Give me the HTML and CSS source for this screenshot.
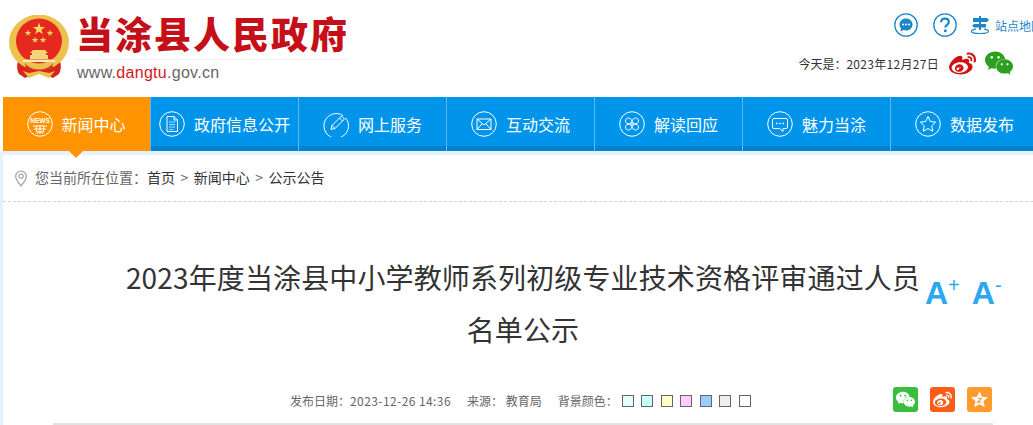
FILE: index.html
```html
<!DOCTYPE html>
<html lang="zh-CN">
<head>
    <meta charset="UTF-8">
    <meta name="viewport" content="width=device-width, initial-scale=1.0">
    <title>当涂县人民政府</title>
    <link rel="stylesheet" href="styles.css">
</head>
<body>
    <svg class="defs" aria-hidden="true">
        <symbol id="weibo" viewBox="0 0 24 24">
            <path d="M10.098 20.323c-3.977.391-7.414-1.406-7.672-4.02-.259-2.609 2.759-5.047 6.74-5.441 3.979-.394 7.413 1.404 7.671 4.018.259 2.6-2.759 5.049-6.737 5.439l-.002.004zM9.05 17.219c-.384.616-1.208.884-1.829.602-.612-.279-.793-.991-.406-1.593.379-.595 1.176-.861 1.793-.601.622.263.82.972.442 1.592zm1.27-1.627c-.141.237-.449.353-.689.253-.236-.09-.313-.361-.177-.586.138-.227.436-.346.672-.24.239.09.315.36.18.601l.014-.028zm.176-2.719c-1.893-.493-4.033.45-4.857 2.118-.836 1.704-.026 3.591 1.886 4.21 1.983.64 4.318-.341 5.132-2.179.8-1.793-.201-3.642-2.161-4.149zm7.563-1.224c-.346-.105-.57-.18-.405-.615.375-.977.42-1.804 0-2.404-.781-1.112-2.915-1.053-5.364-.03 0 0-.766.331-.571-.271.376-1.217.315-2.224-.27-2.809-1.338-1.337-4.869.045-7.888 3.08C1.309 10.87 0 13.273 0 15.348c0 3.981 5.099 6.395 10.086 6.395 6.536 0 10.888-3.801 10.888-6.82 0-1.822-1.547-2.854-2.915-3.284v.01zm1.908-5.092c-.766-.856-1.908-1.187-2.96-.962-.436.09-.706.511-.616.932.09.42.511.691.932.602.511-.105 1.067.044 1.442.465.376.421.466.977.316 1.473-.136.406.089.856.51.992.405.119.857-.105.992-.512.33-1.021.12-2.178-.646-3.035l.03.045zm2.418-2.195c-1.576-1.757-3.905-2.419-6.054-1.968-.496.104-.812.587-.706 1.081.104.496.586.813 1.082.707 1.532-.331 3.185.15 4.296 1.383 1.112 1.246 1.429 2.943.947 4.416-.165.48.106 1.007.586 1.157.479.165.991-.104 1.157-.586.675-2.088.241-4.478-1.338-6.235l.03.045z"/>
        </symbol>
        <symbol id="wechat" viewBox="0 0 24 24">
            <path d="M8.691 2.188C3.891 2.188 0 5.476 0 9.53c0 2.212 1.17 4.203 3.002 5.55a.59.59 0 0 1 .213.665l-.39 1.48c-.019.07-.048.141-.048.213 0 .163.13.295.29.295a.326.326 0 0 0 .167-.054l1.903-1.114a.864.864 0 0 1 .717-.098 10.16 10.16 0 0 0 2.837.403c.276 0 .543-.027.811-.05-.857-2.578.157-4.972 1.932-6.446 1.703-1.415 3.882-1.98 5.853-1.838-.576-3.583-4.196-6.348-8.596-6.348zM5.785 5.991c.642 0 1.162.529 1.162 1.18a1.17 1.17 0 0 1-1.162 1.178A1.17 1.17 0 0 1 4.623 7.17c0-.651.52-1.18 1.162-1.18zm5.813 0c.642 0 1.162.529 1.162 1.18a1.17 1.17 0 0 1-1.162 1.178 1.17 1.17 0 0 1-1.162-1.178c0-.651.52-1.18 1.162-1.18zm5.34 2.867c-1.797-.052-3.746.512-5.28 1.786-1.72 1.428-2.687 3.72-1.78 6.22.942 2.453 3.666 4.229 6.884 4.229.826 0 1.622-.12 2.361-.336a.722.722 0 0 1 .598.082l1.584.926a.272.272 0 0 0 .14.047c.134 0 .24-.111.24-.247 0-.06-.023-.12-.038-.177l-.327-1.233a.582.582 0 0 1-.023-.156.49.49 0 0 1 .201-.398C23.024 18.48 24 16.82 24 14.98c0-3.21-2.931-5.837-6.656-6.088V8.89c-.135-.01-.27-.027-.407-.03zm-2.53 3.274c.535 0 .969.44.969.982a.976.976 0 0 1-.969.983.976.976 0 0 1-.969-.983c0-.542.434-.982.97-.982zm4.844 0c.535 0 .969.44.969.982a.976.976 0 0 1-.969.983.976.976 0 0 1-.969-.983c0-.542.434-.982.969-.982z"/>
        </symbol>
        <symbol id="star" viewBox="-1 -1 2 2">
            <polygon points="0,-1 .225,-.309 .951,-.309 .363,.118 .588,.809 0,.382 -.588,.809 -.363,.118 -.951,-.309 -.225,-.309"/>
        </symbol>
    </svg>

    <div class="page">
        <!-- Header -->
        <header class="header">
            <div class="logo">
                <svg class="emblem" viewBox="0 0 60 64">
                    <path d="M10 44c-3 6-2 11 0 15l6 4 8-4h12l8 4 6-4c2-4 3-9 0-15z" fill="#d9261c"/>
                    <path d="M14 56l6 7 10-4 10 4 6-7-6 2-10-2-10 2z" fill="#edc14d"/>
                    <ellipse cx="30" cy="27.500" rx="30" ry="28" fill="#edc14d"/>
                    <ellipse cx="30" cy="26" rx="23" ry="22.500" fill="#e5291f"/>
                    <g fill="#f9dc5e">
                        <use href="#star" x="23.500" y="7.500" width="13" height="13"/>
                        <use href="#star" x="15.500" y="14.500" width="7" height="7"/>
                        <use href="#star" x="37.500" y="14.500" width="7" height="7"/>
                        <use href="#star" x="22.500" y="21.500" width="7" height="7"/>
                        <use href="#star" x="30.500" y="21.500" width="7" height="7"/>
                    </g>
                    <path d="M24 35h12l3 3h-2v2h2v4H21v-4h2v-2h-2z" fill="#f3d777"/>
                    <path d="M15 44.500h30l2 2.500H13z" fill="#fbeebc"/>
                    <path d="M16 48c2 4 8 6.500 14 6.500S42 52 44 48l-1 5-13 3-13-3z" fill="#d9261c"/>
                </svg>
                <div class="logo-text">
                    <div class="site-name">当涂县人民政府</div>
                    <div class="site-url">www.<span>dangtu</span>.gov.cn</div>
                </div>
            </div>
            <div class="header-right">
                <div class="tools">
                    <svg class="tool-icon" viewBox="0 0 24 24">
                        <circle cx="12" cy="12" r="11.200" fill="none" stroke="#1b87c9" stroke-width="1.300"/>
                        <path d="M12 5.500c-3.800 0-6.500 2.700-6.500 6 0 1.500.6 2.900 1.500 3.900l-.5 3 3-1.300c.8.300 1.600.4 2.500.4 3.800 0 6.500-2.700 6.500-6s-2.700-6-6.500-6z" fill="#1b87c9"/>
                        <circle cx="9" cy="11.500" r="1" fill="#fff"/>
                        <circle cx="12" cy="11.500" r="1" fill="#fff"/>
                        <circle cx="15" cy="11.500" r="1" fill="#fff"/>
                    </svg>
                    <svg class="tool-icon" viewBox="0 0 24 24">
                        <circle cx="12" cy="12" r="11.200" fill="none" stroke="#1b87c9" stroke-width="1.300"/>
                        <path d="M8.200 9.200c0-2.200 1.700-3.500 3.800-3.500s3.800 1.300 3.800 3.300c0 2.800-3.500 2.800-3.500 5.500" fill="none" stroke="#1b87c9" stroke-width="2.200"/>
                        <circle cx="12.300" cy="17.800" r="1.500" fill="#1b87c9"/>
                    </svg>
                    <svg class="map-icon" viewBox="0 0 18 18">
                        <path d="M8 0h2v2h6l2 2-2 2h-6v2h5v3.500h-5V14H8v-2.500H3l-2-1.700L3 8h5V6H2V2h6z" fill="#1b87c9"/>
                        <path d="M5 13.200c-2.800.4-4.500 1.200-4.500 2.100C.5 16.700 4 17.600 9 17.600s8.500-.9 8.500-2.300c0-.9-1.700-1.700-4.500-2.100" fill="none" stroke="#1b87c9" stroke-width="1.200"/>
                    </svg>
                    <span class="map-link">站点地图</span>
                </div>
                <div class="today">
                    <span class="date">今天是&#xFF1A;<span class="num">2023年12月27日</span></span>
                    <svg class="weibo-red"><use href="#weibo"/></svg>
                    <svg class="wechat-green"><use href="#wechat"/></svg>
                </div>
            </div>
        </header>

        <!-- Nav -->
        <nav class="nav">
            <a class="nav-item active">
                <svg class="nav-icon" viewBox="0 0 26 26">
                    <circle cx="13" cy="13" r="12.300"/>
                    <text x="13" y="12" class="news-text">NEWS</text>
                    <path d="M6 15h14M7 18h12M10 21h6M13 14v9M10 14.500c-1 2-1 5 .5 8M16 14.500c1 2 1 5-.5 8"/>
                </svg>
                <span>新闻中心</span>
            </a>
            <a class="nav-item">
                <svg class="nav-icon" viewBox="0 0 26 26">
                    <circle cx="13" cy="13" r="12.300"/>
                    <path d="M8 5.500h7l3.500 3.500v11.500H8zM15 5.500V9h3.500"/>
                    <path class="soft" d="M10 11h6M10 13.500h6M10 16h6M10 18.500h4"/>
                </svg>
                <span>政府信息公开</span>
            </a>
            <a class="nav-item">
                <svg class="nav-icon" viewBox="0 0 26 26">
                    <path d="M20 4.600A12.300 12.300 0 1 0 22.500 6.800"/>
                    <path d="M8 18.500l1-4L18.500 5l3 3L12 17.500zM9 14.500l3 3M16.500 7l3 3"/>
                </svg>
                <span>网上服务</span>
            </a>
            <a class="nav-item">
                <svg class="nav-icon" viewBox="0 0 26 26">
                    <circle cx="13" cy="13" r="12.300"/>
                    <path d="M6 8h14v10.500H6zM6 8l7 6 7-6M6 18.500l5.300-6M20 18.500l-5.300-6"/>
                </svg>
                <span>互动交流</span>
            </a>
            <a class="nav-item">
                <svg class="nav-icon" viewBox="0 0 26 26">
                    <circle cx="13" cy="13" r="12.300"/>
                    <path d="M13 11c-.5-2.500-1.500-4-3.500-4S6.500 8.500 6.500 10.200 8 13 11 13c-3 0-4.500 1-4.500 2.800S7.500 19 9.500 19s3-1.500 3.500-4c.5 2.500 1.500 4 3.500 4s3-1.500 3-3.200S18 13 15 13c3 0 4.500-1 4.500-2.800S18.500 7 16.500 7 13.500 8.500 13 11z"/>
                    <rect class="fill-soft" x="11" y="11" width="4" height="4"/>
                </svg>
                <span>解读回应</span>
            </a>
            <a class="nav-item">
                <svg class="nav-icon" viewBox="0 0 26 26">
                    <circle cx="13" cy="13" r="12.300"/>
                    <path d="M7 7.500h12a1.500 1.500 0 0 1 1.500 1.500v7a1.500 1.500 0 0 1-1.500 1.500h-3v3l-3.500-3H7A1.500 1.500 0 0 1 5.500 16V9A1.500 1.500 0 0 1 7 7.500z"/>
                    <path class="thick" d="M9 12.500h1.500M12.300 12.500h1.500M15.500 12.500H17"/>
                </svg>
                <span>魅力当涂</span>
            </a>
            <a class="nav-item">
                <svg class="nav-icon" viewBox="0 0 26 26">
                    <circle cx="13" cy="13" r="12.300"/>
                    <path d="M13 5.500l2.300 5 5.400.6-4 3.700 1.100 5.400-4.800-2.700-4.800 2.700 1.100-5.400-4-3.700 5.400-.6z"/>
                </svg>
                <span>数据发布</span>
            </a>
        </nav>

        <main class="main">
            <div class="content">
                <div class="crumb">
                    <svg class="pin" viewBox="0 0 12 16">
                        <path d="M6 1C3 1 1 3.200 1 5.800 1 9 4 12.500 6 15c2-2.500 5-6 5-9.200C11 3.200 9 1 6 1z"/>
                        <circle cx="6" cy="5.800" r="2"/>
                    </svg>
                    <span class="crumb-label">您当前所在位置&#xFF1A;</span>
                    <span>首页</span>
                    <span class="crumb-sep">&gt;</span>
                    <span>新闻中心</span>
                    <span class="crumb-sep">&gt;</span>
                    <span>公示公告</span>
                </div>

                <div class="article">
                    <div class="title-row">
                        <h1 class="title">2023年度当涂县中小学教师系列初级专业技术资格评审通过人员名单公示</h1>
                        <div class="font-size">
                            <span class="font-btn">A<sup>+</sup></span>
                            <span class="font-btn">A<sup>-</sup></span>
                        </div>
                    </div>
                    <div class="meta">
                        <span>发布日期&#xFF1A;<span class="num meta-num">2023-12-26 14:36</span></span>
                        <span>来源&#xFF1A; 教育局</span>
                        <span class="colors">背景颜色&#xFF1A;
                            <i class="swatch c1"></i>
                            <i class="swatch c2"></i>
                            <i class="swatch c3"></i>
                            <i class="swatch c4"></i>
                            <i class="swatch c5"></i>
                            <i class="swatch c6"></i>
                            <i class="swatch c7"></i>
                        </span>
                        <div class="share">
                            <div class="share-btn green"><svg><use href="#wechat"/></svg></div>
                            <div class="share-btn orange"><svg><use href="#weibo"/></svg></div>
                            <div class="share-btn yellow">
                                <svg viewBox="0 0 24 24">
                                    <path d="M12 1.500l3.200 7 7.300.8-5.400 5 1.500 7.500-6.600-3.700-6.600 3.700 1.500-7.500-5.400-5 7.300-.8z"/>
                                    <path class="qz" d="M9.500 10.500h5l-5 5h5"/>
                                </svg>
                            </div>
                        </div>
                    </div>
                </div>
            </div>
        </main>
    </div>
</body>
</html>
```

FILE: styles.css
```css
html, body {
    margin: 0;
    height: 100%;
    overflow: hidden;
    background: #fff;
}

body {
    font-family: "Noto Sans CJK SC", "Liberation Sans", sans-serif;
    color: #333;
}

.defs {
    display: none;
}

.page {
    width: 1043px;
}

.num {
    letter-spacing: .3px;
}

.meta-num {
    letter-spacing: .42px;
}

/* header */
.header {
    display: flex;
    justify-content: space-between;
    height: 97px;
}

.logo {
    display: flex;
    padding: 15px 0 0 9px;
}

.emblem {
    width: 60px;
    height: 64px;
    margin-right: 7px;
}

.site-name {
    width: 272px;
    height: 44px;
    border-bottom: 1px solid #eee;
    font-size: 37px;
    line-height: 36px;
    font-weight: 900;
    letter-spacing: 2px;
    white-space: nowrap;
    color: #c50f19;
}

.site-url {
    margin-top: 3px;
    margin-left: 1px;
    font-family: "Liberation Sans", sans-serif;
    font-size: 16px;
    line-height: 20px;
    letter-spacing: .28px;
    color: #666;
}

.site-url span {
    color: #d9161c;
}

.header-right {
    display: flex;
    flex-direction: column;
    align-items: flex-end;
    padding-top: 13px;
}

.tools {
    display: flex;
    align-items: center;
    height: 24px;
}

.tool-icon {
    width: 24px;
    height: 24px;
    margin-right: 15px;
}

.map-icon {
    width: 18px;
    height: 18px;
    margin-left: -1px;
    margin-right: 6px;
}

.map-link {
    font-size: 12px;
    color: #1b87c9;
    white-space: nowrap;
}

.today {
    display: flex;
    align-items: center;
    margin-top: 14px;
    margin-right: 30px;
    height: 24px;
}

.date {
    font-size: 12px;
    color: #333;
    margin-right: 10px;
}

.weibo-red {
    width: 27px;
    height: 27px;
    fill: #d20f10;
    margin-right: 9px;
}

.wechat-green {
    width: 28px;
    height: 28px;
    fill: #2c9f1f;
}

/* nav */
.nav {
    display: flex;
    height: 54px;
    margin-left: 3px;
    background: #0095eb;
    box-shadow: inset 0 -5px 0 #0582c8;
}

.nav-item {
    display: flex;
    align-items: center;
    justify-content: center;
    flex: 0 0 148px;
    box-sizing: border-box;
    gap: 9px;
    padding-bottom: 1px;
    border-right: 1px solid #62b7ea;
    font-size: 16px;
    color: #fff;
    white-space: nowrap;
}

.nav-item.active {
    position: relative;
    gap: 8px;
    background: #ff9400;
}

.nav-item.active::after {
    content: "";
    position: absolute;
    left: 66px;
    top: 54px;
    border-left: 7px solid transparent;
    border-right: 7px solid transparent;
    border-top: 7px solid #ff9400;
}

.nav-icon {
    width: 26px;
    height: 26px;
    fill: none;
    stroke: #fff;
    stroke-width: 1;
    flex: none;
}

.nav-icon .soft {
    stroke: #a8dcf8;
}

.nav-icon .thick {
    stroke-width: 1.6;
}

.nav-icon .fill-soft {
    fill: #a8dcf8;
    stroke: none;
}

.news-text {
    font-family: "Liberation Sans", sans-serif;
    font-size: 6.5px;
    font-weight: bold;
    text-anchor: middle;
    fill: #fff;
    stroke: none;
}

/* main */
.main {
    padding: 4px 0 0 3px;
    background: #e3f2fe;
    height: 274px;
}

.content {
    background: #fff;
    height: 100%;
}

.crumb {
    display: flex;
    align-items: center;
    height: 47px;
    box-sizing: border-box;
    padding-left: 11px;
    padding-bottom: 2px;
    border-bottom: 1px dashed #d5cdd0;
    font-size: 14px;
    color: #333;
}

.pin {
    width: 14px;
    height: 17px;
    margin-right: 7px;
    margin-top: 2px;
    fill: none;
    stroke: #a5a5a5;
    stroke-width: 1.2;
}

.crumb-label {
    color: #666;
}

.crumb-sep {
    margin: 0 5.500px;
    color: #666;
}

/* article */
.article {
    margin: 0 50px;
    height: 223px;
    box-sizing: border-box;
    border-bottom: 2px solid #e2e2e2;
    display: flex;
    flex-direction: column;
}

.title-row {
    display: flex;
    padding: 49px 0 0 67px;
}

.title {
    flex: none;
    width: 806px;
    margin: 0;
    font-size: 28px;
    line-height: 52px;
    font-weight: 400;
    letter-spacing: .13px;
    text-align: center;
    color: #333;
}

.font-size {
    display: flex;
    flex: none;
    gap: 12px;
    margin-left: -1px;
    padding-top: 23px;
}

.font-btn {
    font-family: "Liberation Sans", sans-serif;
    font-size: 32px;
    line-height: 38px;
    font-weight: bold;
    color: #2ea7ee;
}

.font-btn sup {
    font-size: 20px;
    font-weight: normal;
    line-height: 0;
    vertical-align: 12px;
}

.meta {
    display: flex;
    align-items: center;
    gap: 16px;
    margin-top: auto;
    padding: 0 1px 11px 237px;
    font-size: 12px;
    color: #666;
    white-space: nowrap;
}

.meta > span {
    margin-top: 2px;
}

.colors {
    display: flex;
    align-items: center;
    gap: 7.5px;
}

.swatch {
    display: block;
    width: 12px;
    height: 12px;
    box-sizing: border-box;
    border: 1px solid #666;
}

.c1 {
    margin-left: -3.5px;
    background: #e3fdfd;
}
.c2 { background: #c8ffff; }
.c3 { background: #ffffcc; }
.c4 { background: #ffccff; }
.c5 { background: #99ccff; }
.c6 { background: #eeeeee; }
.c7 { background: #ffffff; }

.share {
    display: flex;
    gap: 12px;
    margin-left: auto;
}

.share-btn {
    display: flex;
    align-items: center;
    justify-content: center;
    width: 25px;
    height: 25px;
    border-radius: 3px;
}

.share-btn svg {
    width: 19px;
    height: 19px;
    fill: #fff;
}

.green { background: #38bd3e; }
.orange { background: #fb5d18; }
.yellow { background: #ff9a2e; }

.qz {
    fill: none;
    stroke: #ff9a2e;
    stroke-width: 1.4;
}
```
